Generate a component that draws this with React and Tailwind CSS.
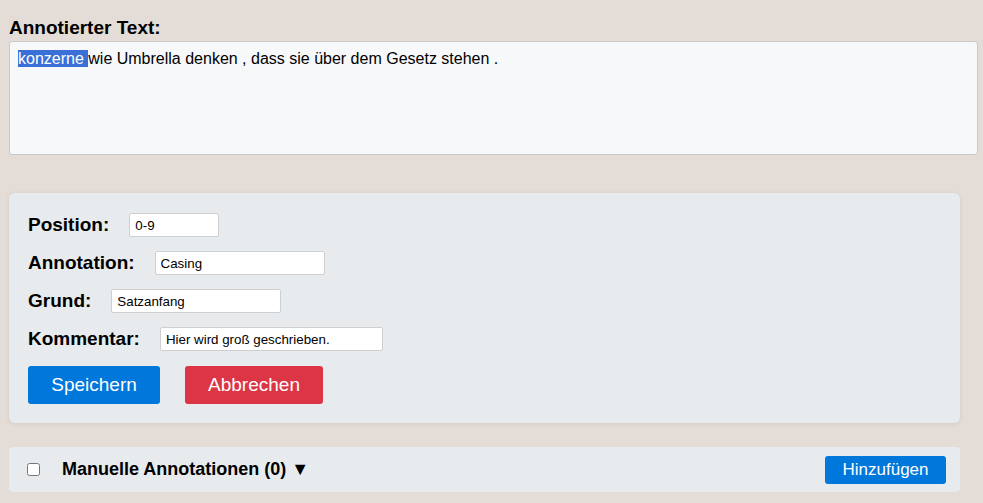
import React from "react";

const FIELDS = [
  { label: "Position:", value: "0-9", width: "w-[90px]" },
  { label: "Annotation:", value: "Casing", width: "w-[170px]" },
  { label: "Grund:", value: "Satzanfang", width: "w-[170px]" },
  { label: "Kommentar:", value: "Hier wird groß geschrieben.", width: "w-[223px]" },
];

export default function App() {
  return (
    <div className="min-h-[503px] w-full bg-[#e4dcd6] pl-[9px] pt-[17px] font-['Liberation_Sans',Arial,sans-serif] text-black">
      <h2 className="text-[19px] font-bold leading-[22px]">Annotierter Text:</h2>
      <div className="mt-[2px] h-[114px] w-[969px] rounded-[3px] border border-[#c9c9c9] bg-[#f7f8fa] px-2 pt-[8px] text-[16px] leading-[18px]">
        <span className="bg-[#3a6fd8] text-white">konzerne </span> wie Umbrella denken , dass sie über dem Gesetz stehen .
      </div>

      <div className="mt-[38px] w-[951px] rounded-[6px] bg-[#e8ebee] px-[19px] pb-[19px] pt-[20px] shadow-[0_1px_5px_rgba(0,0,0,0.08)]">
        <div className="flex flex-col gap-[14px]">
          {FIELDS.map((f) => (
            <div key={f.label} className="flex h-[24px] items-center">
              <label className="mr-[20px] text-[19px] font-bold">{f.label}</label>
              <input
                readOnly
                value={f.value}
                className={`${f.width} h-[24px] rounded-[2px] border border-[#cfcfcf] bg-white px-[5px] text-[13.33px] outline-none`}
              />
            </div>
          ))}
        </div>
        <div className="mt-[15px] flex gap-[25px]">
          <button className="h-[38px] w-[132px] rounded-[3px] bg-[#0077db] text-[19px] text-white">
            Speichern
          </button>
          <button className="h-[38px] w-[138px] rounded-[3px] bg-[#dc3545] text-[19px] text-white">
            Abbrechen
          </button>
        </div>
      </div>

      <div className="mt-[24px] flex h-[45px] w-[951px] items-center rounded-[4px] bg-[#e8ebee] pl-[18px] pr-[14px]">
        <input type="checkbox" className="h-[13px] w-[13px]" />
        <span className="ml-[22px] text-[18px] font-bold">Manuelle Annotationen (0) ▼</span>
        <button className="ml-auto h-[28px] w-[121px] rounded-[3px] bg-[#0077db] text-[17px] text-white">
          Hinzufügen
        </button>
      </div>
    </div>
  );
}
